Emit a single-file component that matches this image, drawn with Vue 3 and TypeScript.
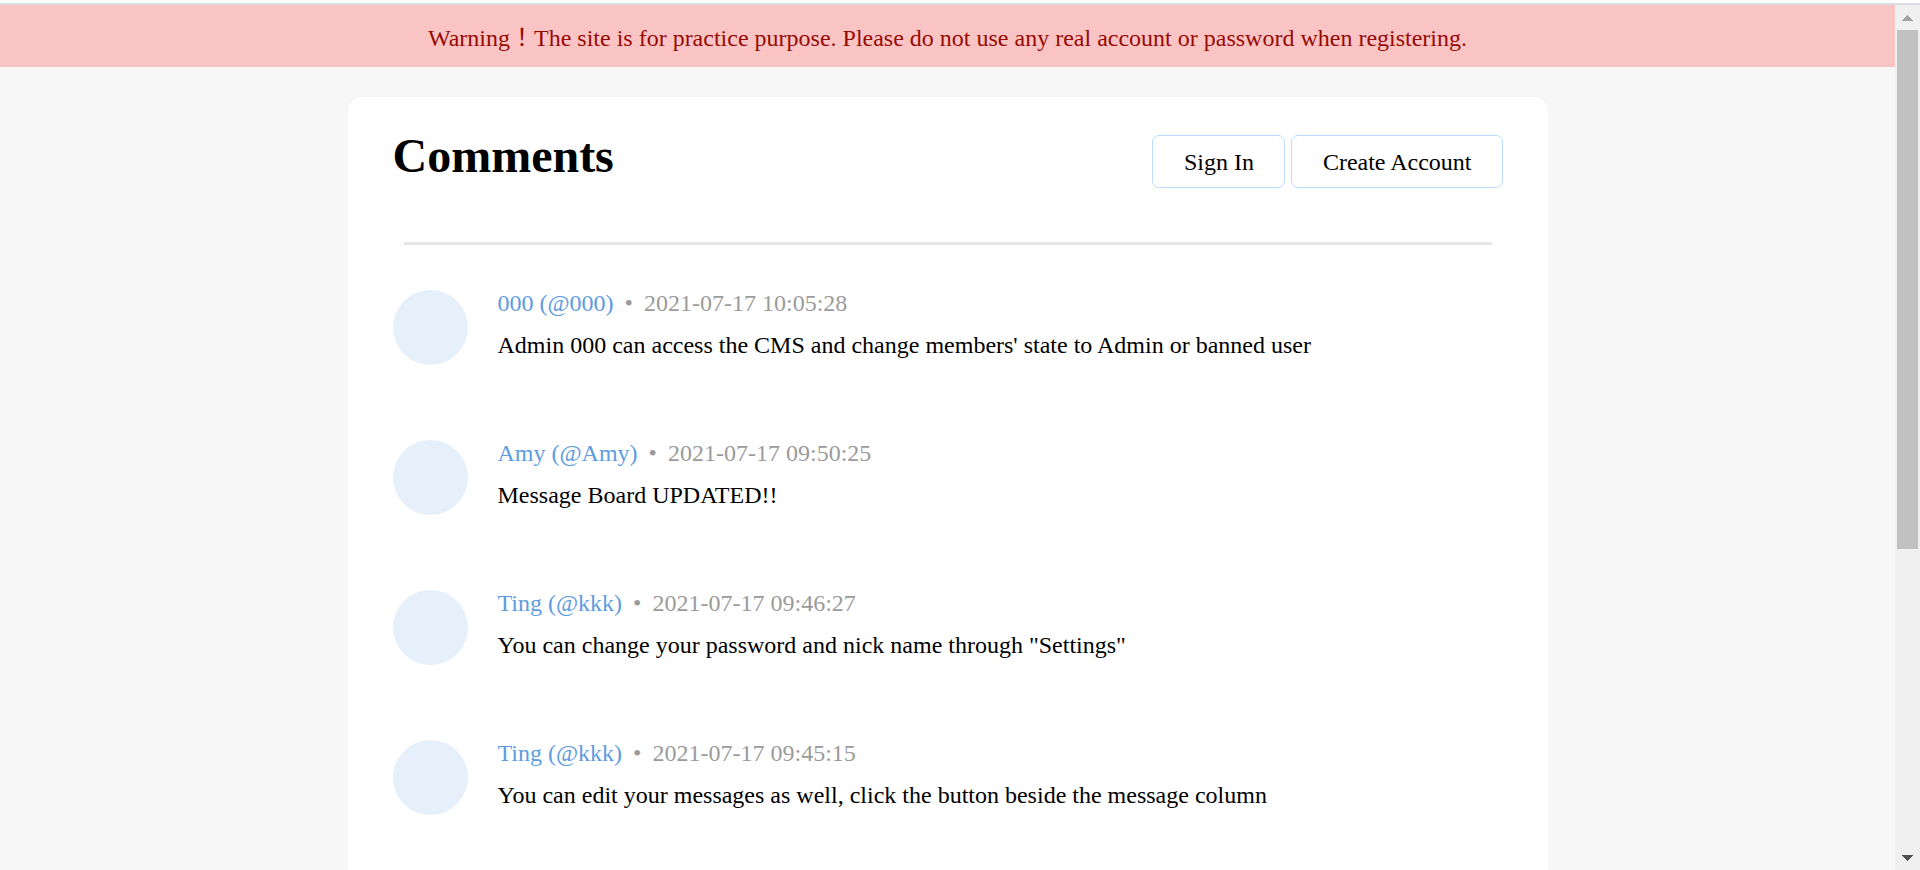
<script setup lang="ts">
interface Comment {
  id: number
  nickname: string
  username: string
  createdAt: string
  content: string
}

const comments: Comment[] = [
  {
    id: 4,
    nickname: '000',
    username: '000',
    createdAt: '2021-07-17 10:05:28',
    content: "Admin 000 can access the CMS and change members' state to Admin or banned user",
  },
  {
    id: 3,
    nickname: 'Amy',
    username: 'Amy',
    createdAt: '2021-07-17 09:50:25',
    content: 'Message Board UPDATED!!',
  },
  {
    id: 2,
    nickname: 'Ting',
    username: 'kkk',
    createdAt: '2021-07-17 09:46:27',
    content: 'You can change your password and nick name through "Settings"',
  },
  {
    id: 1,
    nickname: 'Ting',
    username: 'kkk',
    createdAt: '2021-07-17 09:45:15',
    content: 'You can edit your messages as well, click the button beside the message column',
  },
]
</script>

<template>
  <div class="window">
    <div class="viewport">
      <header class="warning">
        Warning！The site is for practice purpose. Please do not use any real account or password when registering.
      </header>
      <main class="board">
        <div class="board-head">
          <h1 class="board-title">Comments</h1>
          <nav class="board-nav">
            <a class="board-btn" href="#sign-in">Sign In</a>
            <a class="board-btn" href="#create-account">Create Account</a>
          </nav>
        </div>
        <hr class="divider" />
        <section class="comments">
          <article v-for="comment in comments" :key="comment.id" class="card">
            <div class="avatar"></div>
            <div class="card-body">
              <div class="card-info">
                <span class="author">{{ comment.nickname }} (@{{ comment.username }})</span>
                <span>•</span>
                <time>{{ comment.createdAt }}</time>
              </div>
              <p class="card-content">{{ comment.content }}</p>
            </div>
          </article>
        </section>
      </main>
    </div>
    <div class="scrollbar" aria-hidden="true">
      <svg class="arrow" width="11" height="6" viewBox="0 0 11 6" fill="#a3a3a3">
        <path d="M0 6V5H1V4H2V3H3V2H4V1H5V0H6V1H7V2H8V3H9V4H10V5H11V6Z" />
      </svg>
      <div class="track">
        <div class="thumb"></div>
        <div class="rest"></div>
      </div>
      <svg class="arrow" width="11" height="6" viewBox="0 0 11 6" fill="#505050">
        <path d="M0 0V1H1V2H2V3H3V4H4V5H5V6H6V5H7V4H8V3H9V2H10V1H11V0Z" />
      </svg>
    </div>
  </div>
</template>

<style>
body {
  background: #ffffff;
}
</style>

<style scoped>
.window {
  display: flex;
  box-sizing: border-box;
  height: calc(100vh - 3px);
  margin-top: 3px;
  border-top: 2px solid #dadce0;
  font-family: 'Liberation Serif', 'Noto Sans CJK TC', serif;
  font-size: 24px;
  line-height: 27px;
  color: #000000;
}

.viewport {
  flex: 1;
  min-width: 0;
  overflow: hidden auto;
  scrollbar-width: none;
  background: #f7f7f7;
}

.warning {
  padding: 20px 15px 15px;
  text-align: center;
  color: #960a05;
  background: #fbc4c4;
}

.board {
  box-sizing: border-box;
  max-width: 1200px;
  margin: 30px auto;
  padding: 30px 45px 75px;
  border-radius: 15px;
  background: #ffffff;
}

.board-head {
  display: flex;
  justify-content: space-between;
  align-items: flex-start;
}

.board-title {
  margin: 0;
  font-size: 48px;
  line-height: 57px;
}

.board-nav {
  display: flex;
  gap: 6px;
  padding-top: 8px;
}

.board-btn {
  padding: 13px 30px 11px 31px;
  border: 1px solid #b9dcff;
  border-radius: 7px;
  color: inherit;
  text-decoration: none;
}

.divider {
  height: 3px;
  margin: 54px 11px 45px;
  border: 0;
  background: #e6e6e6;
}

.comments {
  display: grid;
  gap: 75px;
}

.card {
  display: flex;
  gap: 30px;
}

.avatar {
  flex: none;
  width: 75px;
  height: 75px;
  border-radius: 50%;
  background: #e5f0fb;
}

.card-body {
  min-width: 0;
}

.card-info {
  display: flex;
  gap: 11px;
  color: #9b9b9b;
}

.author {
  color: #5e9ce0;
}

.card-content {
  margin: 15px 0 0;
}

.scrollbar {
  display: flex;
  flex: none;
  flex-direction: column;
  align-items: center;
  box-sizing: border-box;
  width: 25px;
  padding: 10px 0 9px;
  background: #f0f0f0;
}

.arrow {
  flex: none;
}

.track {
  display: flex;
  flex: 1;
  flex-direction: column;
  width: 21px;
  margin: 9px 0;
}

.thumb {
  flex: 7;
  background: #c1c1c1;
}

.rest {
  flex: 4;
}
</style>
